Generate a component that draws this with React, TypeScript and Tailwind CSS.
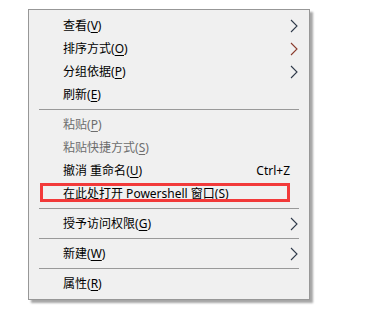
type Item =
  | { kind: 'sep' }
  | { kind: 'item'; label: string; key: string; tail?: string; sub?: boolean; disabled?: boolean; arrowColor?: string; shortcut?: string };

const items: Item[] = [
  { kind: 'item', label: '查看', key: 'V', tail: ')', sub: true },
  { kind: 'item', label: '排序方式', key: 'O', tail: ')', sub: true, arrowColor: '#8a3b2c' },
  { kind: 'item', label: '分组依据', key: 'P', tail: ')', sub: true },
  { kind: 'item', label: '刷新', key: 'E', tail: ')' },
  { kind: 'sep' },
  { kind: 'item', label: '粘贴', key: 'P', tail: ')', disabled: true },
  { kind: 'item', label: '粘贴快捷方式', key: 'S', tail: ')', disabled: true },
  { kind: 'item', label: '撤消 重命名', key: 'U', tail: ')', shortcut: 'Ctrl+Z' },
  { kind: 'item', label: '在此处打开 Powershell 窗口', key: 'S', tail: ')' },
  { kind: 'sep' },
  { kind: 'item', label: '授予访问权限', key: 'G', tail: ')', sub: true },
  { kind: 'sep' },
  { kind: 'item', label: '新建', key: 'W', tail: ')', sub: true },
  { kind: 'sep' },
  { kind: 'item', label: '属性', key: 'R', tail: ')' },
];

function Chevron({ color }: { color: string }) {
  return (
    <svg width="8" height="14" viewBox="0 0 8 14" className="block">
      <path d="M1 1 L7 7 L1 13" fill="none" stroke={color} strokeWidth="1.1" />
    </svg>
  );
}

export default function App() {
  return (
    <div className="min-h-[309px] w-[378px] bg-white pt-[9px] pl-[28px]"
         style={{ fontFamily: '"Noto Sans", "Noto Sans CJK SC", sans-serif' }}>
      <div className="relative w-[282px] border border-[#979797] bg-[#f0f0f0] py-[4px] shadow-[3px_3px_2px_rgba(0,0,0,0.35)]">
        {items.map((it, i) =>
          it.kind === 'sep' ? (
            <div key={i} className="h-[7px] flex items-center px-[10px]">
              <div className="h-px w-full bg-[#999999]" />
            </div>
          ) : (
            <div key={i} className={`h-[23px] flex items-center pl-[34px] pr-[11px] text-[12px] leading-none ${it.disabled ? 'text-[#6d6d6d]' : 'text-black'}`}>
              <span className="whitespace-pre">
                {it.label}(<span className="underline underline-offset-2">{it.key}</span>{it.tail}
              </span>
              <span className="flex-1" />
              {it.shortcut && <span className="mr-[8px]">{it.shortcut}</span>}
              {it.sub && <Chevron color={it.arrowColor ?? '#2f3a4a'} />}
            </div>
          )
        )}
        {/* annotation box */}
        <div className="absolute left-[11px] top-[173px] w-[250px] h-[19px] border-[3px] border-[#f23a3a]" />
      </div>
    </div>
  );
}
